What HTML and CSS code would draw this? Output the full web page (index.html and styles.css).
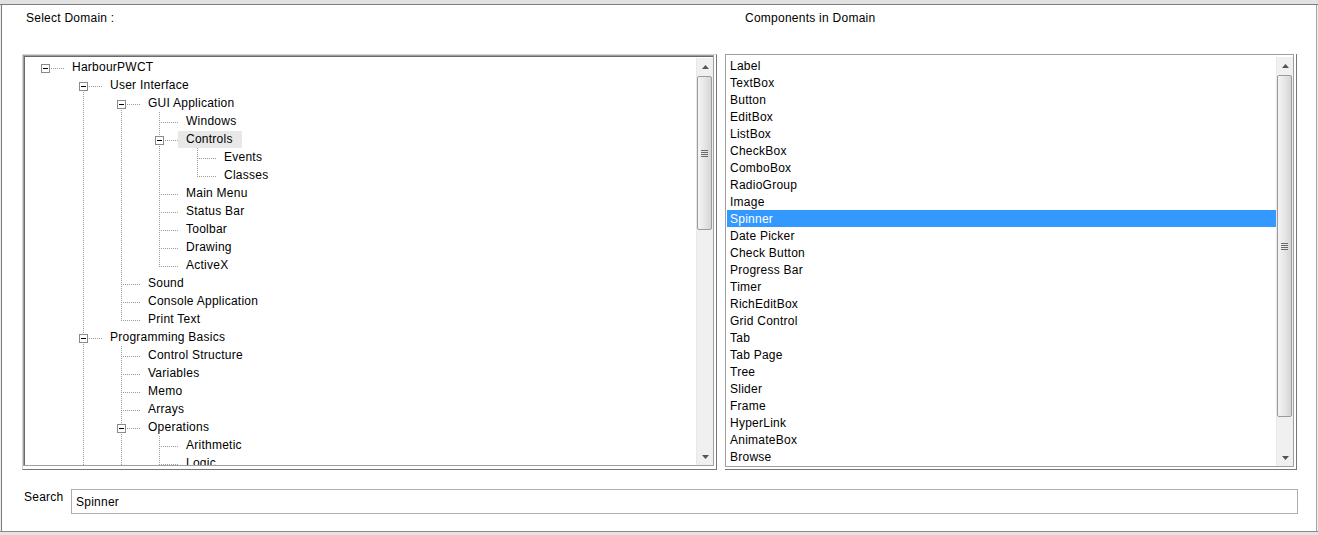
FILE: index.html
```html
<!DOCTYPE html>
<html>
<head>
<meta charset="utf-8">
<title>Select Domain</title>
<link rel="stylesheet" href="styles.css">
</head>
<body>
<div class="topbar"></div>
<div class="window">
  <div class="header">
    <div class="cap-left">Select Domain :</div>
    <div class="cap-right">Components in Domain</div>
  </div>
  <div class="panels">
    <div class="panel-tree">
      <div class="tree">
        <div class="tree-rows">
          <div class="row"><div class="c h"><span class="bx"></span></div><span class="lbl">HarbourPWCT</span></div>
          <div class="row"><div class="c"></div><div class="c tb"><span class="bx"></span></div><span class="lbl">User Interface</span></div>
          <div class="row"><div class="c"></div><div class="c g"></div><div class="c tb"><span class="bx"></span></div><span class="lbl">GUI Application</span></div>
          <div class="row"><div class="c"></div><div class="c g"></div><div class="c g"></div><div class="c t"></div><span class="lbl">Windows</span></div>
          <div class="row"><div class="c"></div><div class="c g"></div><div class="c g"></div><div class="c t"><span class="bx"></span></div><span class="lbl hot">Controls</span></div>
          <div class="row"><div class="c"></div><div class="c g"></div><div class="c g"></div><div class="c g"></div><div class="c t"></div><span class="lbl">Events</span></div>
          <div class="row"><div class="c"></div><div class="c g"></div><div class="c g"></div><div class="c g"></div><div class="c l"></div><span class="lbl">Classes</span></div>
          <div class="row"><div class="c"></div><div class="c g"></div><div class="c g"></div><div class="c t"></div><span class="lbl">Main Menu</span></div>
          <div class="row"><div class="c"></div><div class="c g"></div><div class="c g"></div><div class="c t"></div><span class="lbl">Status Bar</span></div>
          <div class="row"><div class="c"></div><div class="c g"></div><div class="c g"></div><div class="c t"></div><span class="lbl">Toolbar</span></div>
          <div class="row"><div class="c"></div><div class="c g"></div><div class="c g"></div><div class="c t"></div><span class="lbl">Drawing</span></div>
          <div class="row"><div class="c"></div><div class="c g"></div><div class="c g"></div><div class="c l"></div><span class="lbl">ActiveX</span></div>
          <div class="row"><div class="c"></div><div class="c g"></div><div class="c t"></div><span class="lbl">Sound</span></div>
          <div class="row"><div class="c"></div><div class="c g"></div><div class="c t"></div><span class="lbl">Console Application</span></div>
          <div class="row"><div class="c"></div><div class="c g"></div><div class="c l"></div><span class="lbl">Print Text</span></div>
          <div class="row"><div class="c"></div><div class="c t"><span class="bx"></span></div><span class="lbl">Programming Basics</span></div>
          <div class="row"><div class="c"></div><div class="c g"></div><div class="c t"></div><span class="lbl">Control Structure</span></div>
          <div class="row"><div class="c"></div><div class="c g"></div><div class="c t"></div><span class="lbl">Variables</span></div>
          <div class="row"><div class="c"></div><div class="c g"></div><div class="c t"></div><span class="lbl">Memo</span></div>
          <div class="row"><div class="c"></div><div class="c g"></div><div class="c t"></div><span class="lbl">Arrays</span></div>
          <div class="row"><div class="c"></div><div class="c g"></div><div class="c t"><span class="bx"></span></div><span class="lbl">Operations</span></div>
          <div class="row"><div class="c"></div><div class="c g"></div><div class="c g"></div><div class="c t"></div><span class="lbl">Arithmetic</span></div>
          <div class="row"><div class="c"></div><div class="c g"></div><div class="c g"></div><div class="c t"></div><span class="lbl">Logic</span></div>
        </div>
        <div class="scroll scroll-tree">
          <div class="sb-btn"><svg width="7" height="4" viewBox="0 0 7 4"><path d="M0 4 3.5 0 7 4z" fill="#555"/></svg></div>
          <div class="sb-track">
            <div class="sb-thumb thumb-tree"><svg width="7" height="7" viewBox="0 0 7 7"><path d="M0 0.5h7M0 2.5h7M0 4.5h7M0 6.5h7" stroke="#6a6a6a" stroke-width="1"/></svg></div>
          </div>
          <div class="sb-btn"><svg width="7" height="4" viewBox="0 0 7 4"><path d="M0 0 3.5 4 7 0z" fill="#555"/></svg></div>
        </div>
      </div>
    </div>
    <div class="panel-list">
      <div class="list">
        <div class="items">
          <div class="item">Label</div>
          <div class="item">TextBox</div>
          <div class="item">Button</div>
          <div class="item">EditBox</div>
          <div class="item">ListBox</div>
          <div class="item">CheckBox</div>
          <div class="item">ComboBox</div>
          <div class="item">RadioGroup</div>
          <div class="item">Image</div>
          <div class="item sel">Spinner</div>
          <div class="item">Date Picker</div>
          <div class="item">Check Button</div>
          <div class="item">Progress Bar</div>
          <div class="item">Timer</div>
          <div class="item">RichEditBox</div>
          <div class="item">Grid Control</div>
          <div class="item">Tab</div>
          <div class="item">Tab Page</div>
          <div class="item">Tree</div>
          <div class="item">Slider</div>
          <div class="item">Frame</div>
          <div class="item">HyperLink</div>
          <div class="item">AnimateBox</div>
          <div class="item">Browse</div>
        </div>
        <div class="scroll scroll-list">
          <div class="sb-btn"><svg width="7" height="4" viewBox="0 0 7 4"><path d="M0 4 3.5 0 7 4z" fill="#555"/></svg></div>
          <div class="sb-track">
            <div class="sb-thumb thumb-list"><svg width="7" height="7" viewBox="0 0 7 7"><path d="M0 0.5h7M0 2.5h7M0 4.5h7M0 6.5h7" stroke="#6a6a6a" stroke-width="1"/></svg></div>
          </div>
          <div class="sb-btn"><svg width="7" height="4" viewBox="0 0 7 4"><path d="M0 0 3.5 4 7 0z" fill="#555"/></svg></div>
        </div>
      </div>
    </div>
  </div>
  <div class="search">
    <label class="search-label" for="q">Search</label>
    <input class="search-input" id="q" type="text" value="Spinner">
  </div>
</div>
<div class="bottombar"></div>
</body>
</html>
```

FILE: styles.css
```css
:root {
  --dv: repeating-linear-gradient(to bottom, #9a9a9a 0 1px, transparent 1px 2px);
  --dh: repeating-linear-gradient(to right, #9a9a9a 0 1px, transparent 1px 2px);
}
* { box-sizing: border-box; }
html, body { margin: 0; padding: 0; }
body {
  width: 1318px;
  height: 535px;
  overflow: hidden;
  background: #fff;
  font-family: "Liberation Sans", Arial, sans-serif;
  font-size: 12px;
  letter-spacing: 0.25px;
  color: #000;
}
.topbar {
  height: 5px;
  background: #e2e2e2;
  border-bottom: 1px solid #7c7c7c;
}
.window {
  height: 526px;
  border-left: 1px solid #ececec;
  border-right: 1px solid #f0f0f0;
  box-shadow: inset 1px 0 #7a7a7a, inset -1px 0 #a3a3a3;
  padding: 0 19px 0 21px;
  display: flex;
  flex-direction: column;
  background: #fff;
  overflow: hidden;
}
.bottombar {
  height: 4px;
  background: #e4e4e4;
  border-top: 1px solid #8a8a8a;
}
.header {
  display: grid;
  grid-template-columns: 696px 573px;
  column-gap: 7px;
  height: 49px;
  flex: none;
  padding-top: 6px;
  line-height: 14px;
}
.cap-left { padding-left: 4px; }
.cap-right { padding-left: 20px; }
.panels {
  display: grid;
  grid-template-columns: 696px 573px;
  grid-template-rows: 417px;
  column-gap: 7px;
  height: 417px;
  flex: none;
  overflow: hidden;
}
.panel-tree {
  display: flex;
  border-top: 1px solid #d2d2d2;
  border-left: 1px solid #d2d2d2;
  border-right: 1px solid #767676;
  border-bottom: 1px solid #767676;
  padding: 0 2px 3px 0;
  margin: 0 1px 1px 0;
  min-width: 0;
  min-height: 0;
  overflow: hidden;
}
.panel-list {
  display: flex;
  border-right: 1px solid #767676;
  border-bottom: 1px solid #767676;
  padding: 0 2px 2px 0;
  margin: 0 1px 1px 0;
  min-width: 0;
  min-height: 0;
  overflow: hidden;
}
.tree {
  flex: 1;
  display: flex;
  border: 1px solid #a0a0a0;
  box-shadow: inset 1px 1px #696969;
  background: #fff;
  min-width: 0;
  min-height: 0;
}
.tree-rows {
  flex: 1;
  overflow: hidden;
  padding: 2px 0 0 2px;
  min-width: 0;
  min-height: 0;
}
.row {
  display: flex;
  height: 18px;
  white-space: nowrap;
}
.c {
  width: 38px;
  height: 18px;
  flex: none;
  background-repeat: no-repeat;
}
.c.g {
  background-image: var(--dv);
  background-size: 1px 18px;
  background-position: 19px 0;
}
.c.t {
  background-image: var(--dv), var(--dh);
  background-size: 1px 18px, 19px 1px;
  background-position: 19px 0, 19px 10px;
}
.c.l {
  background-image: var(--dv), var(--dh);
  background-size: 1px 10px, 19px 1px;
  background-position: 19px 0, 19px 10px;
}
.c.tb {
  background-image: var(--dv), var(--dh);
  background-size: 1px 8px, 19px 1px;
  background-position: 19px 10px, 19px 10px;
}
.c.h {
  background-image: var(--dh);
  background-size: 19px 1px;
  background-position: 19px 10px;
}
.bx {
  display: block;
  width: 9px;
  height: 9px;
  margin: 6px 0 0 15px;
  border: 1px solid #8a8a8a;
  background: #fff;
}
.bx::after {
  content: "";
  display: block;
  width: 5px;
  height: 1px;
  margin: 3px 0 0 1px;
  background: #000;
}
.lbl {
  display: block;
  height: 17px;
  margin-top: 1px;
  line-height: 16px;
  padding: 0 9px 0 8px;
}
.lbl.hot { background: #e8e8e8; }

.list {
  flex: 1;
  display: flex;
  border: 1px solid #a0a0a0;
  background: #fff;
  min-width: 0;
  min-height: 0;
}
.items {
  flex: 1;
  padding: 2px 0 0 1px;
  overflow: hidden;
  min-width: 0;
}
.item {
  height: 17px;
  line-height: 16px;
  padding: 1px 0 0 3px;
  white-space: nowrap;
}
.item.sel {
  background: #3399ff;
  color: #fff;
}

.scroll {
  width: 17px;
  flex: none;
  display: flex;
  flex-direction: column;
  margin-top: 2px;
  background: #f0f0f0;
  border-left: 1px solid #e8e8e8;
  min-height: 0;
}
.sb-btn {
  height: 17px;
  flex: none;
  display: flex;
  align-items: center;
  justify-content: center;
}
.sb-btn svg { display: block; }
.sb-track {
  flex: 1;
  display: flex;
  flex-direction: column;
  min-height: 0;
}
.sb-thumb {
  flex: none;
  margin: 1px 1px 0 0;
  border: 1px solid #9b9b9b;
  border-radius: 2px;
  background: linear-gradient(to right, #f4f4f4, #e8e8e8 45%, #d5d5d5);
  display: flex;
  align-items: center;
  justify-content: center;
}
.sb-thumb svg { display: block; }
.thumb-tree { height: 154px; }
.thumb-list { height: 342px; }

.search {
  display: flex;
  align-items: flex-start;
  margin-top: 18px;
  height: 25px;
  flex: none;
}
.search-label {
  width: 47px;
  margin: 1px 0 0 2px;
  line-height: 14px;
  flex: none;
}
.search-input {
  flex: 1;
  min-width: 0;
  height: 25px;
  margin: 0;
  border: 1px solid #abadb3;
  padding: 0 4px;
  font-family: "Liberation Sans", Arial, sans-serif;
  font-size: 12px;
  letter-spacing: 0.25px;
  color: #000;
  background: #fff;
  outline: none;
}
```
